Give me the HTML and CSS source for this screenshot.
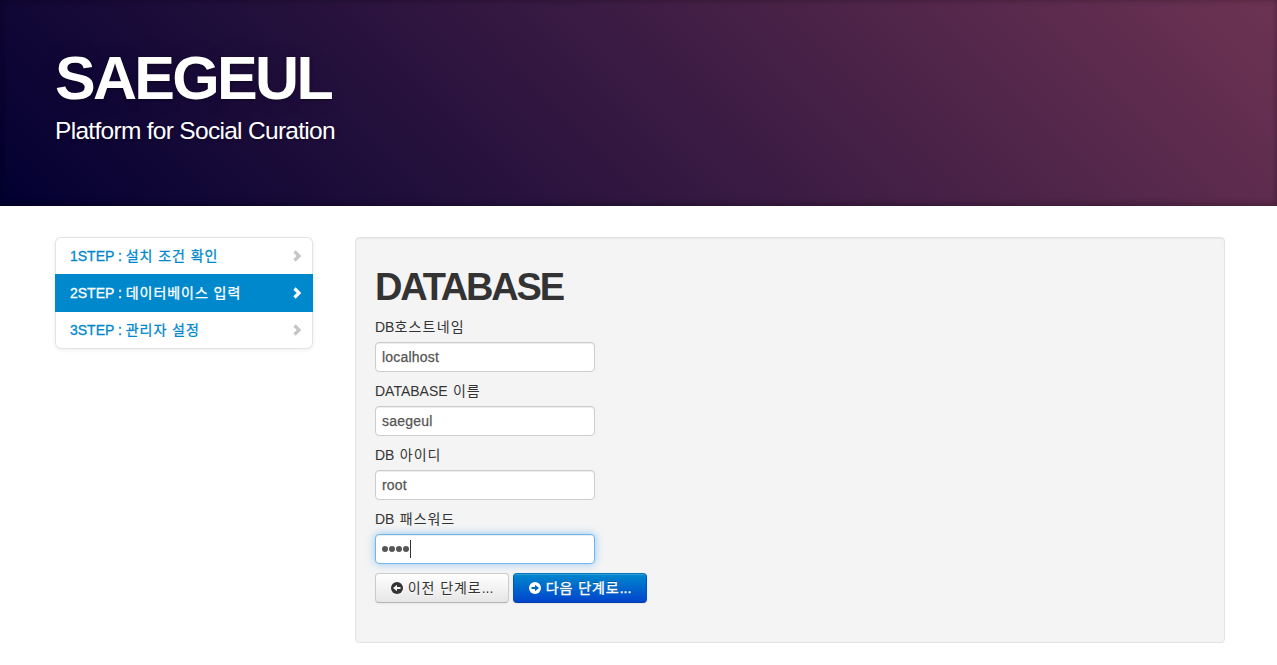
FILE: index.html
```html
<!DOCTYPE html>
<html lang="ko">
<head>
<meta charset="utf-8">
<title>SAEGEUL</title>
<link rel="stylesheet" href="styles.css">
</head>
<body>
<header class="masthead">
  <h1 class="brand">SAEGEUL</h1>
  <p class="tagline">Platform for Social Curation</p>
</header>
<main class="layout">
  <nav class="steps">
    <a class="step"><span class="step-label">1STEP : <span class="ko">설치 조건 확인</span></span><svg class="chevron" width="9" height="12" viewBox="0 0 9 12"><path d="M1.500 1.500 6 6l-4.500 4.500" /></svg></a>
    <a class="step active"><span class="step-label">2STEP : <span class="ko">데이터베이스 입력</span></span><svg class="chevron" width="9" height="12" viewBox="0 0 9 12"><path d="M1.500 1.500 6 6l-4.500 4.500" /></svg></a>
    <a class="step"><span class="step-label">3STEP : <span class="ko">관리자 설정</span></span><svg class="chevron" width="9" height="12" viewBox="0 0 9 12"><path d="M1.500 1.500 6 6l-4.500 4.500" /></svg></a>
  </nav>
  <form class="well">
    <h2 class="title">DATABASE</h2>
    <label class="label" for="host">DB<span class="ko wide">호스트네임</span></label>
    <input class="field" id="host" type="text" value="localhost">
    <label class="label" for="name">DATABASE <span class="ko">이름</span></label>
    <input class="field" id="name" type="text" value="saegeul">
    <label class="label" for="user">DB <span class="ko">아이디</span></label>
    <input class="field" id="user" type="text" value="root">
    <label class="label">DB <span class="ko">패스워드</span></label>
    <div class="field focused"><i class="dot"></i><i class="dot"></i><i class="dot"></i><i class="dot"></i><i class="caret"></i></div>
    <div class="actions">
      <button class="btn" type="button"><svg class="icon" width="12" height="12" viewBox="0 0 12 12"><circle cx="6" cy="6" r="6" fill="#333"/><path d="M2 6l4-3.200v2.200h3.500v2H6v2.200z" fill="#f5f5f5"/></svg><span class="ko">이전 단계로</span>...</button>
      <button class="btn primary" type="button"><svg class="icon" width="12" height="12" viewBox="0 0 12 12"><circle cx="6" cy="6" r="6" fill="#fff"/><path d="M10 6L6 2.800v2.200H2.500v2H6v2.200z" fill="#0066cc"/></svg><span class="ko">다음 단계로</span>...</button>
    </div>
  </form>
</main>
</body>
</html>
```
FILE: styles.css
```css
* { box-sizing: border-box; }
body {
  margin: 0;
  background: #fff;
  color: #333;
  font: 14px/20px "Liberation Sans", "Noto Sans CJK KR", sans-serif;
}
.masthead {
  height: 206px;
  padding: 48px 55px 0;
  color: #fff;
  background: linear-gradient(45deg, #020031 0%, #6d3353 100%);
  box-shadow: inset 0 2px 5px rgba(0,0,0,.15), inset 0 -3px 6px rgba(0,0,0,.2);
  text-shadow: 0 1px 3px rgba(0,0,0,.4), 0 0 30px rgba(0,0,0,.075);
}
.brand { margin: 0; font-size: 61px; line-height: 60px; letter-spacing: -2.700px; }
.tagline { margin: 8px 0 0; font-size: 24.5px; line-height: 30px; letter-spacing: -.7px; }
.layout {
  display: grid;
  grid-template-columns: 258px 870px;
  column-gap: 42px;
  align-items: start;
  padding: 31px 0 0 55px;
}
.steps {
  border-radius: 6px;
  box-shadow: inset 0 0 0 1px #e3e3e3, 0 1px 4px rgba(0,0,0,.065);
  height: 112px;
}
.step {
  display: flex;
  align-items: center;
  justify-content: space-between;
  height: 37px;
  padding: 0 11px 0 15px;
  color: #08c;
  -webkit-text-stroke: .3px currentColor;
}
.step.active { height: 38px; padding-bottom: 1px; background: #08c; color: #fff; }
.step:last-child { padding-bottom: 2px; }
.step-label { white-space: pre; }
.chevron { fill: none; stroke: #c6c6c6; stroke-width: 3.2; }
.active .chevron { stroke: #fff; }
.ko { letter-spacing: .95px; }
.wide { letter-spacing: 1.200px; }
.well {
  height: 406px;
  padding: 29px 19px 0;
  background: #f4f4f4;
  border: 1px solid #e3e3e3;
  border-radius: 4px;
  box-shadow: inset 0 1px 1px rgba(0,0,0,.05);
}
.title { margin: 0 0 10px; font-size: 38px; line-height: 40px; letter-spacing: -2.200px; }
.label { display: block; height: 20px; margin-bottom: 5px; word-spacing: 1.500px; }
.field {
  display: block;
  width: 220px;
  height: 30px;
  margin: 0 0 9px;
  padding: 4px 6px;
  font: 14px/20px "Liberation Sans", sans-serif;
  letter-spacing: .2px;
  color: #555;
  background: #fff;
  border: 1px solid #ccc;
  border-radius: 4px;
  box-shadow: inset 0 1px 1px rgba(0,0,0,.075);
  -webkit-text-stroke: .25px currentColor;
}
.focused {
  display: flex;
  align-items: center;
  gap: 1px;
  border-color: #6fb6ee;
  box-shadow: inset 0 1px 1px rgba(0,0,0,.075), 0 0 8px rgba(82,168,236,.6);
}
.dot { width: 6px; height: 6px; border-radius: 50%; background: #555; }
.caret { width: 1px; height: 18px; background: #333; }
.actions { display: flex; gap: 4px; }
.btn {
  display: flex;
  align-items: center;
  justify-content: center;
  width: 134px;
  height: 30px;
  padding: 0;
  font: 14px/20px "Liberation Sans", "Noto Sans CJK KR", sans-serif;
  color: #333;
  white-space: nowrap;
  background: linear-gradient(#fff, #e6e6e6);
  border: 1px solid #ccc;
  border-bottom-color: #b3b3b3;
  border-radius: 4px;
  text-shadow: 0 1px 1px rgba(255,255,255,.75);
  box-shadow: inset 0 1px 0 rgba(255,255,255,.2), 0 1px 2px rgba(0,0,0,.05);
}
.primary {
  color: #fff;
  background: linear-gradient(#08c, #04c);
  border-color: #0074c0 #0052c4 #003ba8;
  text-shadow: 0 -1px 0 rgba(0,0,0,.25);
  -webkit-text-stroke: .35px currentColor;
}
.icon { margin-right: 5px; }
```
